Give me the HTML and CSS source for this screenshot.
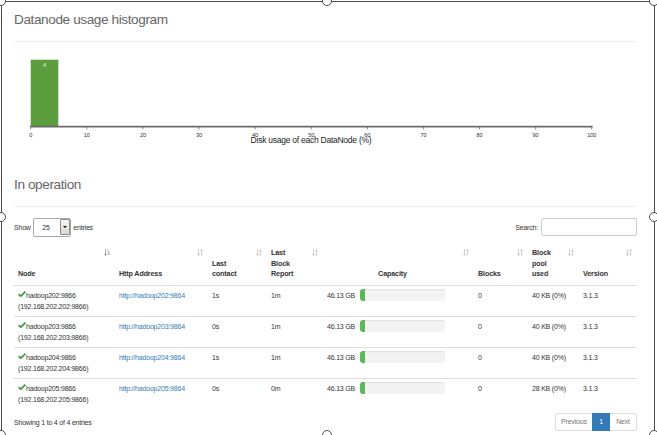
FILE: index.html
```html
<!DOCTYPE html>
<html lang="en">
<head>
<meta charset="utf-8">
<title>Datanode Information</title>
<link rel="stylesheet" href="styles.css">
</head>
<body>
<div class="page">
  <section>
    <div class="page-header"><h2>Datanode usage histogram</h2></div>
    <svg class="chart" viewBox="14 41.6 623 124" width="623" height="124">
      <rect x="30.7" y="59.3" width="27.6" height="66.6" fill="#5c9e3e"/>
      <text x="44.5" y="67" class="bar-label">4</text>
      <line x1="30.2" y1="126.2" x2="592.6" y2="126.2" stroke="#6b6b6b" stroke-width="1.6"/>
      <g stroke="#6b6b6b" stroke-width="0.8">
        <line x1="30.7" y1="126" x2="30.7" y2="129"/>
        <line x1="86.8" y1="126" x2="86.8" y2="129"/>
        <line x1="142.9" y1="126" x2="142.9" y2="129"/>
        <line x1="199" y1="126" x2="199" y2="129"/>
        <line x1="255.1" y1="126" x2="255.1" y2="129"/>
        <line x1="311.2" y1="126" x2="311.2" y2="129"/>
        <line x1="367.3" y1="126" x2="367.3" y2="129"/>
        <line x1="423.4" y1="126" x2="423.4" y2="129"/>
        <line x1="479.5" y1="126" x2="479.5" y2="129"/>
        <line x1="535.6" y1="126" x2="535.6" y2="129"/>
        <line x1="591.7" y1="126" x2="591.7" y2="129"/>
      </g>
      <g class="tick">
        <text x="30.7" y="136.7">0</text>
        <text x="86.8" y="136.7">10</text>
        <text x="142.9" y="136.7">20</text>
        <text x="199" y="136.7">30</text>
        <text x="255.1" y="136.7">40</text>
        <text x="311.2" y="136.7">50</text>
        <text x="367.3" y="136.7">60</text>
        <text x="423.4" y="136.7">70</text>
        <text x="479.5" y="136.7">80</text>
        <text x="535.6" y="136.7">90</text>
        <text x="591.7" y="136.7">100</text>
      </g>
      <text x="311" y="143" class="axis-label">Disk usage of each DataNode (%)</text>
    </svg>
  </section>

  <section>
    <div class="page-header"><h2>In operation</h2></div>
    <div class="controls">
      <div class="length">
        <span>Show</span>
        <span class="select"><span class="select-val">25</span><span class="select-btn"><span class="caret"></span></span></span>
        <span>entries</span>
      </div>
      <label class="search">Search: <input type="search" class="search-input"></label>
    </div>

    <table class="dn-table">
      <colgroup>
        <col class="c-node"><col class="c-http"><col class="c-contact"><col class="c-report"><col class="c-cap"><col class="c-blocks"><col class="c-pool"><col class="c-ver">
      </colgroup>
      <thead>
        <tr>
          <th>Node<span class="sort"><svg width="6" height="7" viewBox="0 0 6 7"><path d="M1.5 0.3V6.4M0.3 5.1L1.5 6.4L2.7 5.1" fill="none" stroke="#8a8a8a" stroke-width="0.8"/><path d="M3.6 1.2H4.8M3.6 3.1H5.4M3.6 5H6" stroke="#8a8a8a" stroke-width="0.9"/></svg></span></th>
          <th>Http Address<span class="sort"><svg width="6" height="7" viewBox="0 0 6 7"><path d="M1.5 0.3V6.4M0.3 5.1L1.5 6.4L2.7 5.1M4.5 6.7V0.6M3.3 1.9L4.5 0.6L5.7 1.9" fill="none" stroke="#c4c4c4" stroke-width="0.8"/></svg></span></th>
          <th>Last<br>contact<span class="sort"><svg width="6" height="7" viewBox="0 0 6 7"><path d="M1.5 0.3V6.4M0.3 5.1L1.5 6.4L2.7 5.1M4.5 6.7V0.6M3.3 1.9L4.5 0.6L5.7 1.9" fill="none" stroke="#c4c4c4" stroke-width="0.8"/></svg></span></th>
          <th>Last<br>Block<br>Report<span class="sort"><svg width="6" height="7" viewBox="0 0 6 7"><path d="M1.5 0.3V6.4M0.3 5.1L1.5 6.4L2.7 5.1M4.5 6.7V0.6M3.3 1.9L4.5 0.6L5.7 1.9" fill="none" stroke="#c4c4c4" stroke-width="0.8"/></svg></span></th>
          <th class="th-center">Capacity<span class="sort"><svg width="6" height="7" viewBox="0 0 6 7"><path d="M1.5 0.3V6.4M0.3 5.1L1.5 6.4L2.7 5.1M4.5 6.7V0.6M3.3 1.9L4.5 0.6L5.7 1.9" fill="none" stroke="#c4c4c4" stroke-width="0.8"/></svg></span></th>
          <th>Blocks<span class="sort"><svg width="6" height="7" viewBox="0 0 6 7"><path d="M1.5 0.3V6.4M0.3 5.1L1.5 6.4L2.7 5.1M4.5 6.7V0.6M3.3 1.9L4.5 0.6L5.7 1.9" fill="none" stroke="#c4c4c4" stroke-width="0.8"/></svg></span></th>
          <th>Block<br>pool<br>used<span class="sort"><svg width="6" height="7" viewBox="0 0 6 7"><path d="M1.5 0.3V6.4M0.3 5.1L1.5 6.4L2.7 5.1M4.5 6.7V0.6M3.3 1.9L4.5 0.6L5.7 1.9" fill="none" stroke="#c4c4c4" stroke-width="0.8"/></svg></span></th>
          <th>Version<span class="sort"><svg width="6" height="7" viewBox="0 0 6 7"><path d="M1.5 0.3V6.4M0.3 5.1L1.5 6.4L2.7 5.1M4.5 6.7V0.6M3.3 1.9L4.5 0.6L5.7 1.9" fill="none" stroke="#c4c4c4" stroke-width="0.8"/></svg></span></th>
        </tr>
      </thead>
      <tbody>
        <tr>
          <td><svg class="ok" width="8" height="6" viewBox="0 0 8 6"><path d="M0.6 3.2L2.8 5.2L7.4 0.6" fill="none" stroke="#3f9a3a" stroke-width="1.7"/></svg>hadoop202:9866<br>(192.168.202.202:9866)</td>
          <td><a href="#">http://hadoop202:9864</a></td>
          <td>1s</td>
          <td>1m</td>
          <td><div class="cap"><span>46.13 GB</span><div class="progress"><div class="bar" style="width:6%"></div></div></div></td>
          <td>0</td>
          <td>40 KB (0%)</td>
          <td>3.1.3</td>
        </tr>
        <tr>
          <td><svg class="ok" width="8" height="6" viewBox="0 0 8 6"><path d="M0.6 3.2L2.8 5.2L7.4 0.6" fill="none" stroke="#3f9a3a" stroke-width="1.7"/></svg>hadoop203:9866<br>(192.168.202.203:9866)</td>
          <td><a href="#">http://hadoop203:9864</a></td>
          <td>0s</td>
          <td>1m</td>
          <td><div class="cap"><span>46.13 GB</span><div class="progress"><div class="bar" style="width:6%"></div></div></div></td>
          <td>0</td>
          <td>40 KB (0%)</td>
          <td>3.1.3</td>
        </tr>
        <tr>
          <td><svg class="ok" width="8" height="6" viewBox="0 0 8 6"><path d="M0.6 3.2L2.8 5.2L7.4 0.6" fill="none" stroke="#3f9a3a" stroke-width="1.7"/></svg>hadoop204:9866<br>(192.168.202.204:9866)</td>
          <td><a href="#">http://hadoop204:9864</a></td>
          <td>1s</td>
          <td>1m</td>
          <td><div class="cap"><span>46.13 GB</span><div class="progress"><div class="bar" style="width:6%"></div></div></div></td>
          <td>0</td>
          <td>40 KB (0%)</td>
          <td>3.1.3</td>
        </tr>
        <tr>
          <td><svg class="ok" width="8" height="6" viewBox="0 0 8 6"><path d="M0.6 3.2L2.8 5.2L7.4 0.6" fill="none" stroke="#3f9a3a" stroke-width="1.7"/></svg>hadoop205:9866<br>(192.168.202.205:9866)</td>
          <td><a href="#">http://hadoop205:9864</a></td>
          <td>0s</td>
          <td>0m</td>
          <td><div class="cap"><span>46.13 GB</span><div class="progress"><div class="bar" style="width:6%"></div></div></div></td>
          <td>0</td>
          <td>28 KB (0%)</td>
          <td>3.1.3</td>
        </tr>
      </tbody>
    </table>

    <div class="footer">
      <div class="info">Showing 1 to 4 of 4 entries</div>
      <ul class="pagination">
        <li class="disabled"><span>Previous</span></li>
        <li class="active"><span>1</span></li>
        <li class="disabled"><span>Next</span></li>
      </ul>
    </div>
  </section>
</div>

<div class="frame"></div>
<span class="handle h-tl"></span>
<span class="handle h-tc"></span>
<span class="handle h-tr"></span>
<span class="handle h-ml"></span>
<span class="handle h-mr"></span>
<span class="handle h-bl"></span>
<span class="handle h-bc"></span>
<span class="handle h-br"></span>
</body>
</html>
```

FILE: styles.css
```css
html, body {
  margin: 0;
  padding: 0;
  overflow: hidden;
  background: #fff;
}

body {
  font-family: "Liberation Sans", Arial, sans-serif;
  font-size: 7px;
  letter-spacing: -0.2px;
  color: #333;
}

.page {
  width: 623px;
  margin-left: 14px;
}

.page-header {
  padding-top: 10.6px;
  padding-bottom: 12px;
  border-bottom: 1px solid #eee;
}

.page-header h2 {
  margin: 0;
  font-size: 13.6px;
  letter-spacing: -0.4px;
  line-height: 18px;
  font-weight: normal;
  color: #666;
}

/* chart */
.chart {
  display: block;
}

.chart .bar-label {
  fill: #fff;
  font-size: 5px;
  text-anchor: middle;
}

.chart .tick text {
  font-size: 5.6px;
  letter-spacing: -0.1px;
  fill: #333;
  text-anchor: middle;
}

.chart .axis-label {
  font-size: 8.5px;
  letter-spacing: -0.25px;
  fill: #222;
  text-anchor: middle;
}

/* controls */
.controls {
  display: flex;
  justify-content: space-between;
  align-items: center;
  height: 19px;
  margin-top: 10.5px;
}

.length {
  display: flex;
  align-items: center;
}

.select {
  display: flex;
  box-sizing: border-box;
  width: 37.7px;
  height: 19px;
  margin: 0 2.3px 0 2.6px;
  border: 1px solid #a9a9a9;
  border-radius: 2px;
  background: #fff;
}

.select-val {
  flex: 1;
  padding-left: 8px;
  line-height: 17px;
}

.select-btn {
  display: flex;
  align-items: center;
  justify-content: center;
  box-sizing: border-box;
  width: 9.6px;
  margin: 0.5px 0.5px 0.5px 0;
  border: 1px solid #8c8c8c;
  border-radius: 1px;
  background: linear-gradient(#f6f6f6, #d9d9d9);
}

.caret {
  width: 0;
  height: 0;
  border-left: 2.3px solid transparent;
  border-right: 2.3px solid transparent;
  border-top: 2.8px solid #111;
}

.search {
  display: flex;
  align-items: center;
}

.search-input {
  box-sizing: border-box;
  width: 96px;
  height: 17.5px;
  margin: 0 0 0 3px;
  padding: 0 3px;
  border: 1px solid #ccc;
  border-radius: 2px;
  font: inherit;
  outline: none;
}

/* table */
.dn-table {
  width: 623px;
  margin-top: 7px;
  border-collapse: collapse;
  table-layout: fixed;
}

.c-node { width: 101px; }
.c-http { width: 93px; }
.c-contact { width: 59px; }
.c-report { width: 56px; }
.c-cap { width: 151px; }
.c-blocks { width: 54px; }
.c-pool { width: 51px; }
.c-ver { width: 58px; }

.dn-table th {
  position: relative;
  padding: 4.5px 4px 5px;
  line-height: 10.5px;
  font-size: 7.2px;
  letter-spacing: -0.15px;
  font-weight: bold;
  text-align: left;
  vertical-align: bottom;
  border-bottom: 1px solid #ddd;
}

.dn-table th.th-center {
  text-align: center;
  padding-right: 16px;
}

.sort {
  position: absolute;
  top: 5.5px;
  right: 5px;
  line-height: 0;
}

.dn-table td {
  padding: 4px;
  line-height: 11px;
  vertical-align: top;
  border-top: 1px solid #ddd;
  white-space: nowrap;
}

.ok {
  vertical-align: 1px;
  margin-right: 0;
}

.dn-table a {
  color: #337ab7;
  text-decoration: none;
}

.cap {
  display: grid;
  grid-template-columns: 32.6px 85px;
  align-items: center;
}

.progress {
  height: 12px;
  margin-top: -0.5px;
  border-radius: 2.5px;
  background: #f3f3f3;
  box-shadow: inset 0 1px 1px rgba(0, 0, 0, 0.08);
  overflow: hidden;
}

.progress .bar {
  height: 100%;
  background: #5cb85c;
  border-radius: 2.5px 0 0 2.5px;
}

/* footer */
.footer {
  display: flex;
  justify-content: space-between;
  align-items: center;
  margin-top: 4.5px;
}

.pagination {
  display: flex;
  margin: 0;
  padding: 0;
  list-style: none;
}

.pagination li span {
  display: block;
  height: 18px;
  box-sizing: border-box;
  padding: 0 5.6px;
  line-height: 16px;
  border: 1px solid #ddd;
  margin-left: -1px;
  color: #777;
  background: #fff;
}

.pagination li:first-child span {
  margin-left: 0;
  border-radius: 2px 0 0 2px;
}

.pagination li:last-child span {
  padding: 0 6.2px;
  border-radius: 0 2px 2px 0;
}

.pagination li.active span {
  position: relative;
  background: #337ab7;
  border-color: #337ab7;
  color: #fff;
  padding: 0 6px;
}

/* editor selection overlay */
.frame {
  position: absolute;
  left: 0.5px;
  top: 0.5px;
  width: 654px;
  height: 440px;
  box-sizing: border-box;
  border: 1.5px solid #4d4d4d;
  pointer-events: none;
}

.handle {
  position: absolute;
  width: 10px;
  height: 10px;
  box-sizing: border-box;
  border: 1.5px solid #4d4d4d;
  border-radius: 50%;
  background: #fff;
}

.h-tl { left: -3.7px; top: -3.7px; }
.h-tc { left: 322px; top: -3.7px; }
.h-tr { left: 648.8px; top: -3.7px; }
.h-ml { left: -3.7px; top: 212px; }
.h-mr { left: 648.8px; top: 212px; }
.h-bl { left: -3.7px; top: 430px; }
.h-bc { left: 322px; top: 430px; }
.h-br { left: 648.8px; top: 430px; }
```
